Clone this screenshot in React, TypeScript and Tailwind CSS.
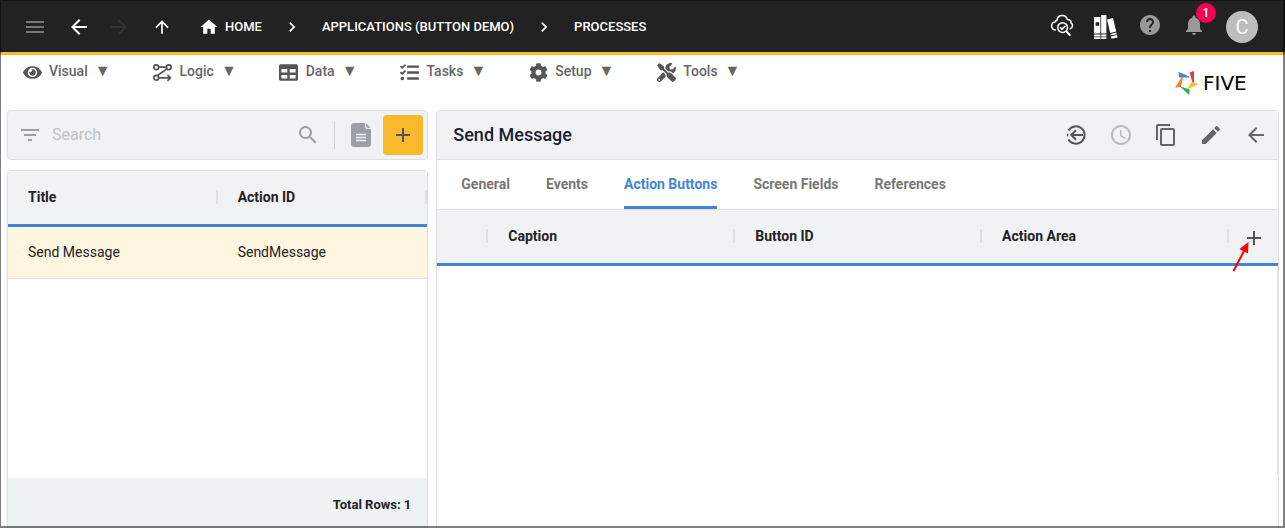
import type { ComponentType, ReactNode } from "react";
import { FaCog, FaEye, FaTable, FaTasks, FaTools } from "react-icons/fa";
import {
	MdAccessTime,
	MdAdd,
	MdArrowBack,
	MdArrowForward,
	MdArrowUpward,
	MdChevronRight,
	MdContentCopy,
	MdEdit,
	MdFilterList,
	MdHelp,
	MdHome,
	MdMenu,
	MdNotifications,
	MdSearch,
} from "react-icons/md";

type IconProps = { size?: number };

const LogicIcon = ({ size = 20 }: IconProps) => (
	<svg width={size} height={size} viewBox="0 0 20 20" fill="none" stroke="currentColor" strokeWidth="1.8">
		<circle cx="3.4" cy="4.4" r="2.5" />
		<circle cx="16.6" cy="4.4" r="2.5" />
		<circle cx="3.4" cy="15.600" r="2.5" />
		<path d="M6 4.400h8M14.800 6.200 8.400 10.600c-1.400 1-2.400 1.200-3.400 2.800M6 15.600h12M15.200 12.400l3.200 3.200-3.200 3.200" />
	</svg>
);

const CloudSearchIcon = () => (
	<svg width="24" height="24" viewBox="0 0 24 24" fill="none" stroke="currentColor" strokeWidth="1.5" strokeLinecap="round">
		<path d="M5.200 17C3 16.600 1.600 15 1.600 13c0-2.200 1.400-3.700 3.400-4 .4-1.200 1-1.600 2-1.800C7.400 4.200 9.400 2.600 12 2.600c2.700 0 4.600 1.400 5.400 3.900 2.400.1 3.800 1.400 3.700 3.300 1 .6 1.500 1.600 1.400 2.900-.1 1.600-.9 2.700-2.300 3.100" />
		<circle cx="12.600" cy="14.600" r="4.900" />
		<path d="m10.400 14.600 1.600 1.700 2.900-3.100" />
		<path d="m16.400 18.400 3.400 3.600" strokeWidth="2" />
	</svg>
);

const BooksIcon = () => (
	<svg width="24" height="24" viewBox="0 0 24 24" fill="currentColor">
		<path d="M0 2h6.400v16.600H0zM0 19.400h6.400v2H0zM0 22.200h6.400V24H0zM7.200 0h5.200v18.600H7.200zM7.200 19.400h5.200v2H7.200zM7.200 22.200h5.200V24H7.200z" />
		<path d="M1.600 7.200h3.600v3.600H1.600z" fill="#222" />
		<path d="m13 4.400 6-1.400 3.200 13.600-6 1.400zM16.400 18.900l6-1.400.4 1.700-6 1.400zM17 21.500l6-1.400.6 2.300-6 1.400z" />
	</svg>
);

const DocumentIcon = () => (
	<svg width="20" height="24" viewBox="0 0 20 24" fill="currentColor">
		<path d="M3 0h11v3.500A2.500 2.500 0 0 0 16.500 6H20v15a3 3 0 0 1-3 3H3a3 3 0 0 1-3-3V3a3 3 0 0 1 3-3z" />
		<path d="m15.200.4 4.400 4.400h-3.200a1.200 1.200 0 0 1-1.200-1.200z" />
		<path d="M5 11.500h10M5 14.500h10M5 17.500h10" stroke="#f1f2f4" strokeWidth="1.400" />
	</svg>
);

const ReturnIcon = () => (
	<svg width="24" height="24" viewBox="0 0 24 24" fill="none" stroke="currentColor" strokeWidth="2">
		<path d="M4.400 7.600A8.700 8.700 0 1 1 4.400 16.400M19 12H7.500M12 7.200 7.200 12l4.800 4.800" />
		<path d="M3.600 10.600v2.800" strokeWidth="1.400" />
	</svg>
);

const Logo = () => (
	<a href="#" aria-label="Five" className="flex items-center gap-1 text-black">
		<svg width="24" height="24" viewBox="0 0 24 24">
			<path fill="#4285d8" d="M3.500 1 14 5.200v1.200H4.200z" />
			<path fill="#e53d3d" d="M19 0v11.600h-1.600L14.600 1.600z" />
			<path fill="#fbbc2c" d="M24 13 11.800 18.400 16.800 11z" />
			<path fill="#34a853" d="M14.200 24 4.600 15.200 14.600 18.400z" />
			<path fill="#fb7c1f" d="M0 16.400 7 6l.8 1-2 9z" />
		</svg>
		<span className="w-[59px] font-['DejaVu_Sans'] text-xl leading-6">FIVE</span>
	</a>
);

const Crumb = ({ children }: { children: ReactNode }) => (
	<a href="#" className="flex items-center gap-[6px] text-[13px] font-medium">
		{children}
	</a>
);

const Header = () => (
	<header className="flex h-[55px] items-center border-b-[3px] border-[#f9b928] bg-[#222] pt-[2px] pr-[27px] pl-[23px] text-white">
		<button aria-label="Menu" className="text-[#777]">
			<MdMenu size={24} />
		</button>
		<button aria-label="Back" className="ml-5">
			<MdArrowBack size={24} />
		</button>
		<button aria-label="Forward" disabled className="ml-4 text-[#333]">
			<MdArrowForward size={24} />
		</button>
		<button aria-label="Up" className="ml-[21px]">
			<MdArrowUpward size={20} />
		</button>
		<nav className="ml-[27px] flex items-center gap-5">
			<Crumb>
				<MdHome size={20} /> HOME
			</Crumb>
			<MdChevronRight size={20} />
			<Crumb>APPLICATIONS (BUTTON DEMO)</Crumb>
			<MdChevronRight size={20} />
			<Crumb>PROCESSES</Crumb>
		</nav>
		<div className="ml-auto flex items-center gap-5">
			<div className="flex items-center gap-5 pb-1">
				<button aria-label="Inspect">
					<CloudSearchIcon />
				</button>
				<button aria-label="Library" className="pt-1">
					<BooksIcon />
				</button>
				<button aria-label="Help" className="text-[#999]">
					<MdHelp size={24} />
				</button>
				<button aria-label="Notifications" className="relative text-[#999]">
					<MdNotifications size={24} />
					<span className="absolute -top-[10px] -right-[10px] flex size-5 items-center justify-center rounded-full bg-[#f50057] text-xs font-medium text-white">
						1
					</span>
				</button>
			</div>
			<button className="flex size-8 items-center justify-center rounded-full bg-[#bdbdbd] text-xl text-[#fafafa]">C</button>
		</div>
	</header>
);

const menus: { label: string; Icon: ComponentType<IconProps> }[] = [
	{ label: "Visual", Icon: FaEye },
	{ label: "Logic", Icon: LogicIcon },
	{ label: "Data", Icon: FaTable },
	{ label: "Tasks", Icon: FaTasks },
	{ label: "Setup", Icon: FaCog },
	{ label: "Tools", Icon: FaTools },
];

const MenuBar = () => (
	<div className="flex h-[55px] items-start justify-between pr-[23px] pl-[22px]">
		<nav className="flex gap-[42px] pt-1">
			{menus.map(({ label, Icon }) => (
				<button key={label} className="flex h-6 items-center gap-[7px] text-sm font-medium text-[#666]">
					<span className="flex w-5 justify-center pt-[2px] text-[#555]">
						<Icon size={19} />
					</span>
					<span>{label}</span>
					<span className="text-base">▼</span>
				</button>
			))}
		</nav>
		<div className="pt-4">
			<Logo />
		</div>
	</div>
);

const ColumnHead = ({ children }: { children?: ReactNode }) => (
	<th scope="col" className="h-14 border-b-[3px] border-[#4285d8] p-0 pb-[2px] text-left font-bold">
		<div className="flex items-center justify-between pl-5">
			<span>{children}</span>
			<span className="h-[14px] w-[2px] bg-[#dedfe0]" />
		</div>
	</th>
);

const Cell = ({ children }: { children: ReactNode }) => (
	<td className="h-[52px] border-b border-[#e2e2e2] pb-[2px] pl-5">{children}</td>
);

const ListPanel = () => (
	<section className="flex min-h-0 flex-col gap-[10px]">
		<div className="flex h-[50px] shrink-0 items-center rounded border border-[#dedfe0] bg-[#f1f2f4] pr-1 pl-[10px] text-[#9aa0a6]">
			<button aria-label="Filter">
				<MdFilterList size={24} />
			</button>
			<input
				type="text"
				aria-label="Search"
				placeholder="Search"
				className="ml-[10px] min-w-0 flex-1 bg-transparent text-base outline-none placeholder:text-[#bfc1c3]"
			/>
			<button aria-label="Search">
				<MdSearch size={24} />
			</button>
			<span className="ml-[14px] h-7 w-px bg-[#d0d2d4]" />
			<button aria-label="Documentation" className="ml-4">
				<DocumentIcon />
			</button>
			<button aria-label="Add" className="ml-3 flex size-10 items-center justify-center rounded bg-[#f8b92c] text-[#555]">
				<MdAdd size={24} />
			</button>
		</div>
		<div className="flex min-h-0 flex-1 flex-col justify-between rounded-t border border-b-0 border-[#dedfe0]">
			<table className="w-full table-fixed border-separate border-spacing-0 text-sm text-[#222]">
				<thead className="bg-[#f1f2f4]">
					<tr>
						<ColumnHead>Title</ColumnHead>
						<ColumnHead>Action ID</ColumnHead>
					</tr>
				</thead>
				<tbody>
					<tr className="bg-[#fff6e2]">
						<Cell>Send Message</Cell>
						<Cell>SendMessage</Cell>
					</tr>
				</tbody>
			</table>
			<div className="flex h-[50px] items-center justify-end bg-[#eef2f3] pt-1 pr-4 text-[13px] font-bold text-[#222]">
				Total Rows: 1
			</div>
		</div>
	</section>
);

const tabs = ["General", "Events", "Action Buttons", "Screen Fields", "References"];

const DetailPanel = () => (
	<section className="flex min-h-0 flex-col rounded-t border border-b-0 border-[#dedfe0]">
		<div className="flex h-[49px] shrink-0 items-center justify-between border-b border-[#dedfe0] bg-[#f1f2f4] pr-[10px] pl-4">
			<h1 className="text-lg font-medium text-[#1a2030]">Send Message</h1>
			<div className="flex gap-[21px] text-[#666]">
				<button aria-label="Return" className="text-[#555]">
					<ReturnIcon />
				</button>
				<button aria-label="History" disabled className="text-[#b8b9bb]">
					<MdAccessTime size={24} />
				</button>
				<button aria-label="Copy">
					<MdContentCopy size={24} />
				</button>
				<button aria-label="Edit">
					<MdEdit size={24} />
				</button>
				<button aria-label="Close">
					<MdArrowBack size={24} />
				</button>
			</div>
		</div>
		<div role="tablist" className="flex h-[50px] shrink-0 gap-9 border-b border-[#dedfe0] pl-6 text-sm font-bold text-[#777]">
			{tabs.map((tab) => (
				<button
					key={tab}
					role="tab"
					aria-selected={tab === "Action Buttons"}
					className="border-b-[3px] border-transparent pt-[2px] aria-selected:rounded-t-sm aria-selected:border-[#4285d8] aria-selected:text-[#4285d8]"
				>
					{tab}
				</button>
			))}
		</div>
		<table className="w-full table-fixed border-separate border-spacing-0 text-sm text-[#222]">
			<colgroup>
				<col className="w-[51px]" />
				<col />
				<col />
				<col />
				<col className="w-[49px]" />
			</colgroup>
			<thead className="bg-[#f1f2f4]">
				<tr>
					<ColumnHead />
					<ColumnHead>Caption</ColumnHead>
					<ColumnHead>Button ID</ColumnHead>
					<ColumnHead>Action Area</ColumnHead>
					<th scope="col" className="border-b-[3px] border-[#4285d8] p-0">
						<button aria-label="Add action button" className="relative flex w-full justify-center pt-[2px] text-[#555]">
							<MdAdd size={24} />
							<svg className="absolute top-[18px] left-[3px]" width="18" height="30" viewBox="0 0 18 30">
								<path d="M1.500 29 12.500 8" stroke="#f00" strokeWidth="2" />
								<path d="M16.500 0 16 11.500 7.500 7z" fill="#f00" />
							</svg>
						</button>
					</th>
				</tr>
			</thead>
		</table>
		<div className="mb-[53px] flex-1 border-r border-[#e4e4e4]" />
	</section>
);

const App = () => (
	<div className="relative flex h-screen flex-col overflow-hidden bg-white font-['Roboto',sans-serif]">
		<Header />
		<MenuBar />
		<main className="grid min-h-0 flex-1 grid-cols-[1fr_2fr] gap-2 pr-[6px] pl-[7px]">
			<ListPanel />
			<DetailPanel />
		</main>
		<div className="pointer-events-none absolute inset-0 border-t border-r-2 border-b-2 border-l border-black/50" />
	</div>
);

export default App;
